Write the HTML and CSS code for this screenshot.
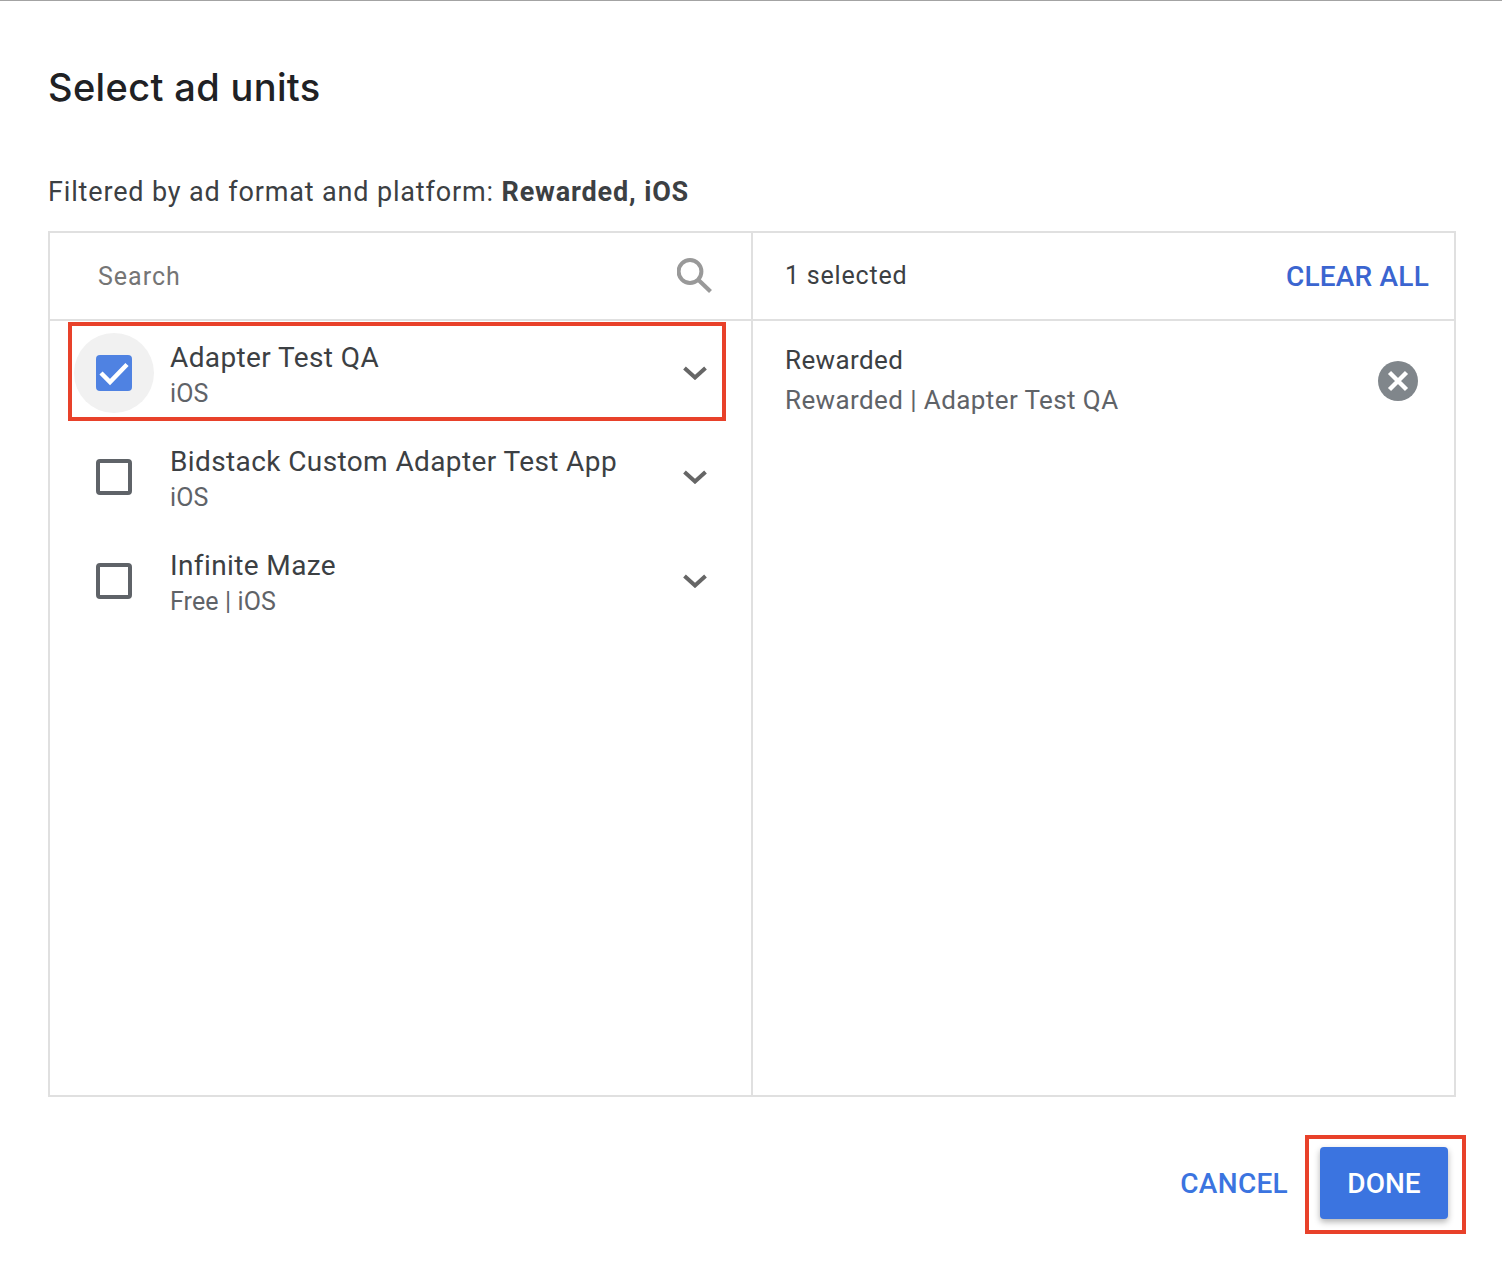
FILE: index.html
```html
<!DOCTYPE html>
<html lang="en">
<head>
<meta charset="utf-8">
<title>Select ad units</title>
<link rel="stylesheet" href="styles.css">
</head>
<body>
<main class="dialog">
  <h1 class="title">Select ad units</h1>
  <p class="filter">Filtered by ad format and platform: <strong>Rewarded, iOS</strong></p>
  <section class="picker">
    <div class="pane left">
      <div class="pane-head search-head">
        <span class="search-label">Search</span>
        <svg class="search-icon" viewBox="0 0 36 36"><circle cx="13" cy="13.5" r="11.4" fill="none" stroke="#999" stroke-width="4"/><path d="M21.5 22 L33.5 33.5" fill="none" stroke="#999" stroke-width="4.2"/></svg>
      </div>
      <div class="rows">
        <div class="row">
          <span class="check-wrap halo"><span class="check on"><svg viewBox="0 0 36 36"><path d="M5 18 L14 27 L31 9.5" fill="none" stroke="#fff" stroke-width="4.5"/></svg></span></span>
          <div class="row-text"><div class="row-name">Adapter Test QA</div><div class="row-sub">iOS</div></div>
          <svg class="chev" viewBox="0 0 24 14"><path d="M1.5 2 L12 11.5 L22.5 2" fill="none" stroke="#666" stroke-width="4"/></svg>
        </div>
        <div class="row">
          <span class="check-wrap"><span class="check"></span></span>
          <div class="row-text"><div class="row-name">Bidstack Custom Adapter Test App</div><div class="row-sub">iOS</div></div>
          <svg class="chev" viewBox="0 0 24 14"><path d="M1.5 2 L12 11.5 L22.5 2" fill="none" stroke="#666" stroke-width="4"/></svg>
        </div>
        <div class="row">
          <span class="check-wrap"><span class="check"></span></span>
          <div class="row-text"><div class="row-name">Infinite Maze</div><div class="row-sub">Free | iOS</div></div>
          <svg class="chev" viewBox="0 0 24 14"><path d="M1.5 2 L12 11.5 L22.5 2" fill="none" stroke="#666" stroke-width="4"/></svg>
        </div>
      </div>
      <div class="highlight row-highlight"></div>
    </div>
    <div class="pane right">
      <div class="pane-head selected-head">
        <span class="count">1 selected</span>
        <span class="clear">CLEAR ALL</span>
      </div>
      <div class="sel-item">
        <div>
          <div class="sel-name">Rewarded</div>
          <div class="sel-sub">Rewarded | Adapter Test QA</div>
        </div>
        <svg class="remove" viewBox="0 0 40 40"><circle cx="20" cy="20" r="20" fill="#80868b"/><path d="M11.5 11.5 L28.5 28.5 M28.5 11.5 L11.5 28.5" stroke="#fff" stroke-width="4.4" fill="none"/></svg>
      </div>
    </div>
  </section>
  <footer class="actions">
    <span class="cancel">CANCEL</span>
    <span class="done-wrap"><span class="done">DONE</span></span>
  </footer>
</main>
</body>
</html>
```

FILE: styles.css
```css
* { box-sizing: border-box; }
html, body { margin: 0; height: 100%; }
body {
  background: #fff;
  font-family: Roboto, "Liberation Sans", sans-serif;
  color: #3c4043;
  border-top: 1px solid #a3a3a3;
  overflow: hidden;
}
.dialog { padding: 0 46px 0 48px; width: 1502px; }
.title {
  margin: 60px 0 0;
  font-family: Inter, Roboto, sans-serif;
  font-weight: 500;
  font-size: 38px;
  line-height: 52px;
  letter-spacing: 0.35px;
  color: #202124;
}
.filter {
  margin: 61px 0 0;
  font-size: 27px;
  line-height: 36px;
  letter-spacing: 0.85px;
}
.filter strong { font-weight: 700; }
.picker {
  display: flex;
  margin-top: 21px;
  height: 866px;
  border: 2px solid #e0e0e0;
}
.pane { position: relative; flex: 1 1 0; }
.left { border-right: 2px solid #e0e0e0; flex: 0 0 703px; }
.pane-head {
  height: 88px;
  border-bottom: 2px solid #e0e0e0;
  display: flex;
  align-items: center;
  justify-content: space-between;
}
.search-head { padding: 0 38px 0 48px; }
.search-label { font-size: 25px; color: #757575; letter-spacing: 1px; }
.search-icon { width: 36px; height: 36px; }
.selected-head { padding: 0 25px 0 32px; }
.count { font-size: 25px; letter-spacing: 0.8px; margin-top: -2px; }
.clear { font-size: 28px; font-weight: 500; color: #3b65d0; letter-spacing: 0.2px; }
.row { display: flex; align-items: center; height: 104px; }
.check-wrap {
  flex: none;
  width: 80px;
  height: 80px;
  margin-left: 24px;
  border-radius: 50%;
  display: flex;
  align-items: center;
  justify-content: center;
}
.halo { background: #f1f1f1; }
.check {
  width: 36px;
  height: 36px;
  border: 4px solid #5f6368;
  border-radius: 4px;
  display: block;
}
.check.on { background: #4f82e2; border: 0; }
.check svg { display: block; width: 36px; height: 36px; }
.row-text { margin-left: 16px; flex: 1; padding-top: 4px; }
.row-name { font-size: 28px; line-height: 36px; letter-spacing: 0.39px; }
.row-sub { font-size: 25px; line-height: 32px; margin-top: 2px; color: #5f6368; letter-spacing: 0.1px; }
.chev { flex: none; width: 24px; height: 14px; margin-right: 44px; }
.highlight { position: absolute; border: 4px solid #e8412a; pointer-events: none; }
.row-highlight { left: 18px; top: 89px; width: 658px; height: 99px; }
.sel-item { display: flex; justify-content: space-between; align-items: center; padding: 19px 36px 0 32px; }
.sel-name { font-size: 26px; line-height: 40px; letter-spacing: 0.4px; }
.sel-sub { font-size: 26px; line-height: 40px; color: #5f6368; letter-spacing: 0.4px; }
.remove { width: 40px; height: 40px; margin-top: 2px; }
.actions { display: flex; align-items: center; justify-content: flex-end; margin-top: 38px; }
.cancel { font-size: 28px; font-weight: 500; color: #3b74e0; margin-right: 17px; margin-top: -2px; letter-spacing: 0.3px; }
.done-wrap { display: block; padding: 8px 14px 11px 11px; border: 4px solid #e8412a; margin-right: -10px; }
.done {
  display: block;
  width: 128px;
  height: 72px;
  line-height: 74px;
  text-align: center;
  background: #3b74e0;
  color: #fff;
  border-radius: 4px;
  font-size: 28px;
  font-weight: 500;
  box-shadow: 0 3px 6px rgba(0,0,0,.3);
}
```
